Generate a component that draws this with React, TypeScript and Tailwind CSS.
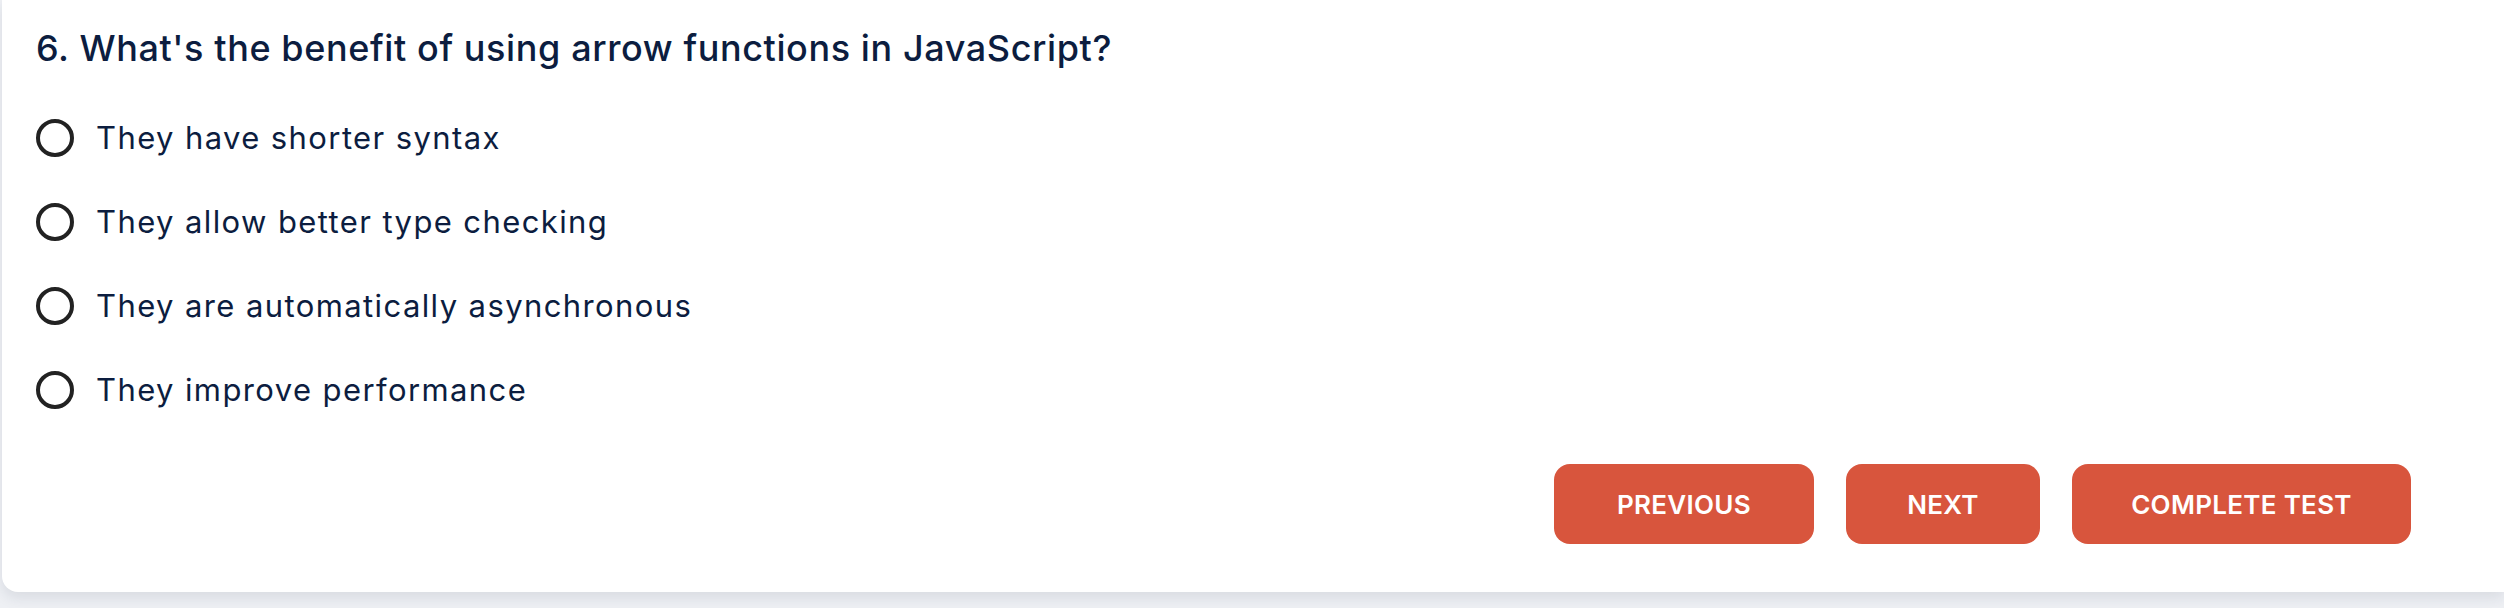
const options = [
  "They have shorter syntax",
  "They allow better type checking",
  "They are automatically asynchronous",
  "They improve performance",
];

export default function App() {
  return (
    <div className="h-[608px] w-full bg-[#eef0f4] pl-[2px] font-['Inter',sans-serif]">
      {/* question card */}
      <div className="flex h-[592px] flex-col rounded-bl-[16px] bg-white pl-[34px] pr-[93px] shadow-[0_6px_14px_rgba(30,40,70,0.10)]">
        <h2 className="mt-[26px] text-[36px] font-medium leading-[44px] tracking-[0.6px] text-[#0c1d3f]">
          6. What's the benefit of using arrow functions in JavaScript?
        </h2>

        <div className="mt-[48px] flex flex-col gap-[45px]">
          {options.map((opt) => (
            <label key={opt} className="flex h-[39px] items-center gap-[22px]">
              <span className="h-[38px] w-[38px] shrink-0 rounded-full border-[4px] border-[#222222]" />
              <span className="text-[31px] leading-[39px] tracking-[1.4px] text-[#0c1d3f]">{opt}</span>
            </label>
          ))}
        </div>

        <div className="mt-[55px] flex justify-end gap-[32px]">
          <button className="h-[80px] w-[260px] rounded-[16px] bg-[#d8553d] text-[26px] font-semibold tracking-[0.3px] text-white">
            PREVIOUS
          </button>
          <button className="h-[80px] w-[194px] rounded-[16px] bg-[#d8553d] text-[26px] font-semibold tracking-[0.3px] text-white">
            NEXT
          </button>
          <button className="h-[80px] w-[339px] rounded-[16px] bg-[#d8553d] text-[26px] font-semibold tracking-[0.3px] text-white">
            COMPLETE TEST
          </button>
        </div>
      </div>
    </div>
  );
}
